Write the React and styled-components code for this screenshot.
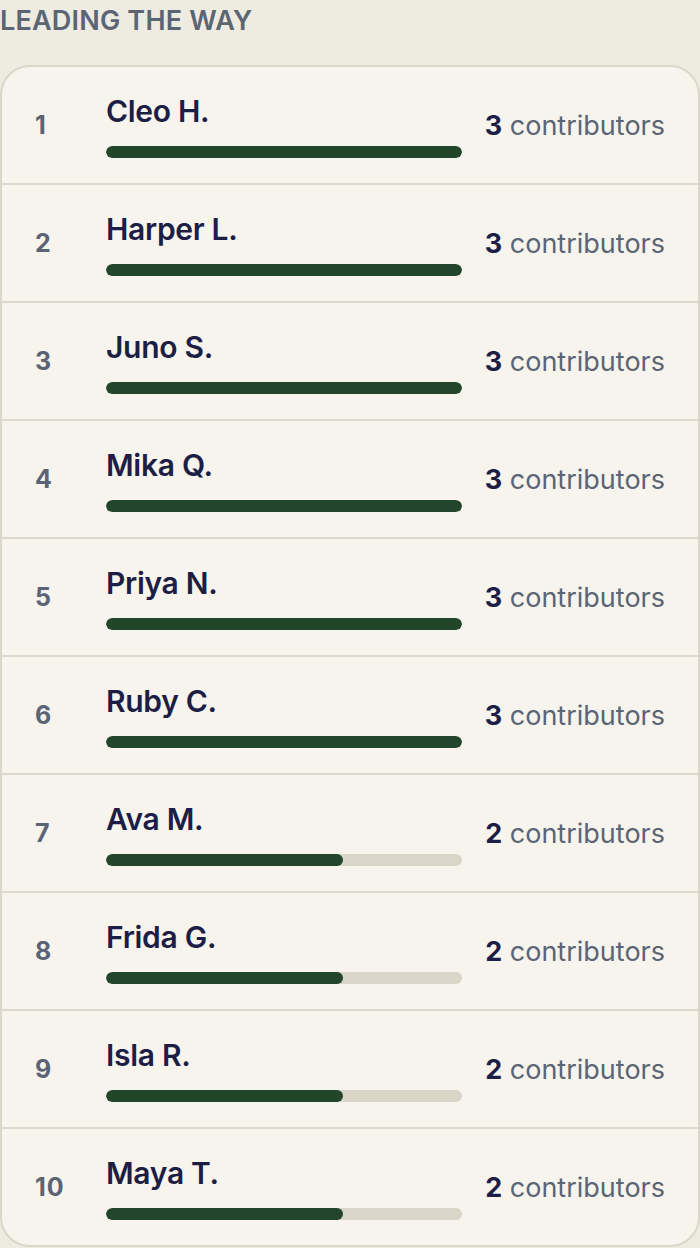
import React from 'react';
import styled, { createGlobalStyle } from 'styled-components';

const GlobalStyle = createGlobalStyle`
  body {
    margin: 0;
    background: #eeebe1;
    font-family: Inter, "Noto Sans", "Liberation Sans", sans-serif;
  }
`;

const leaders = [
  { name: 'Cleo H.', count: 3 },
  { name: 'Harper L.', count: 3 },
  { name: 'Juno S.', count: 3 },
  { name: 'Mika Q.', count: 3 },
  { name: 'Priya N.', count: 3 },
  { name: 'Ruby C.', count: 3 },
  { name: 'Ava M.', count: 2 },
  { name: 'Frida G.', count: 2 },
  { name: 'Isla R.', count: 2 },
  { name: 'Maya T.', count: 2 },
];

const Page = styled.div`
  padding: 0;
`;

const Heading = styled.h2`
  margin: 0;
  padding: 4px 0 0 0;
  height: 65px;
  box-sizing: border-box;
  font-size: 27px;
  font-weight: 600;
  letter-spacing: 0.2px;
  color: #5b6574;
`;

const Card = styled.div`
  background: #f7f4ed;
  border: 2px solid #dad6ca;
  border-radius: 30px;
  overflow: hidden;
`;

const Row = styled.div`
  display: grid;
  grid-template-columns: 71px 356px 1fr;
  align-items: center;
  height: 116px;
  padding: 0 33px 0 33px;
  border-bottom: 2px solid #dcd8cc;
  box-sizing: content-box;

  &:last-child {
    border-bottom: none;
  }
`;

const Rank = styled.span`
  font-size: 25px;
  font-weight: 700;
  color: #5a6475;
  letter-spacing: 1px;
`;

const Middle = styled.div`
  display: flex;
  flex-direction: column;
  gap: 17px;
  padding-top: 1px;
`;

const Name = styled.span`
  font-size: 30px;
  font-weight: 600;
  line-height: 36px;
  color: #1d1e45;
  letter-spacing: -0.3px;
`;

const Track = styled.div`
  height: 12px;
  border-radius: 6px;
  background: #d9d5c8;
  overflow: hidden;
`;

const Fill = styled.div`
  height: 100%;
  border-radius: 6px;
  background: #22452c;
`;

const Count = styled.span`
  justify-self: end;
  font-size: 27px;
  color: #5b6575;
  white-space: nowrap;

  b {
    font-weight: 700;
    color: #1d1e45;
  }
`;

export default function App() {
  const max = Math.max(...leaders.map((l) => l.count));
  return (
    <Page>
      <GlobalStyle />
      <Heading>LEADING THE WAY</Heading>
      <Card>
        {leaders.map((l, i) => (
          <Row key={l.name}>
            <Rank>{i + 1}</Rank>
            <Middle>
              <Name>{l.name}</Name>
              <Track>
                <Fill style={{ width: `${(l.count / max) * 100}%` }} />
              </Track>
            </Middle>
            <Count>
              <b>{l.count}</b> contributors
            </Count>
          </Row>
        ))}
      </Card>
    </Page>
  );
}
